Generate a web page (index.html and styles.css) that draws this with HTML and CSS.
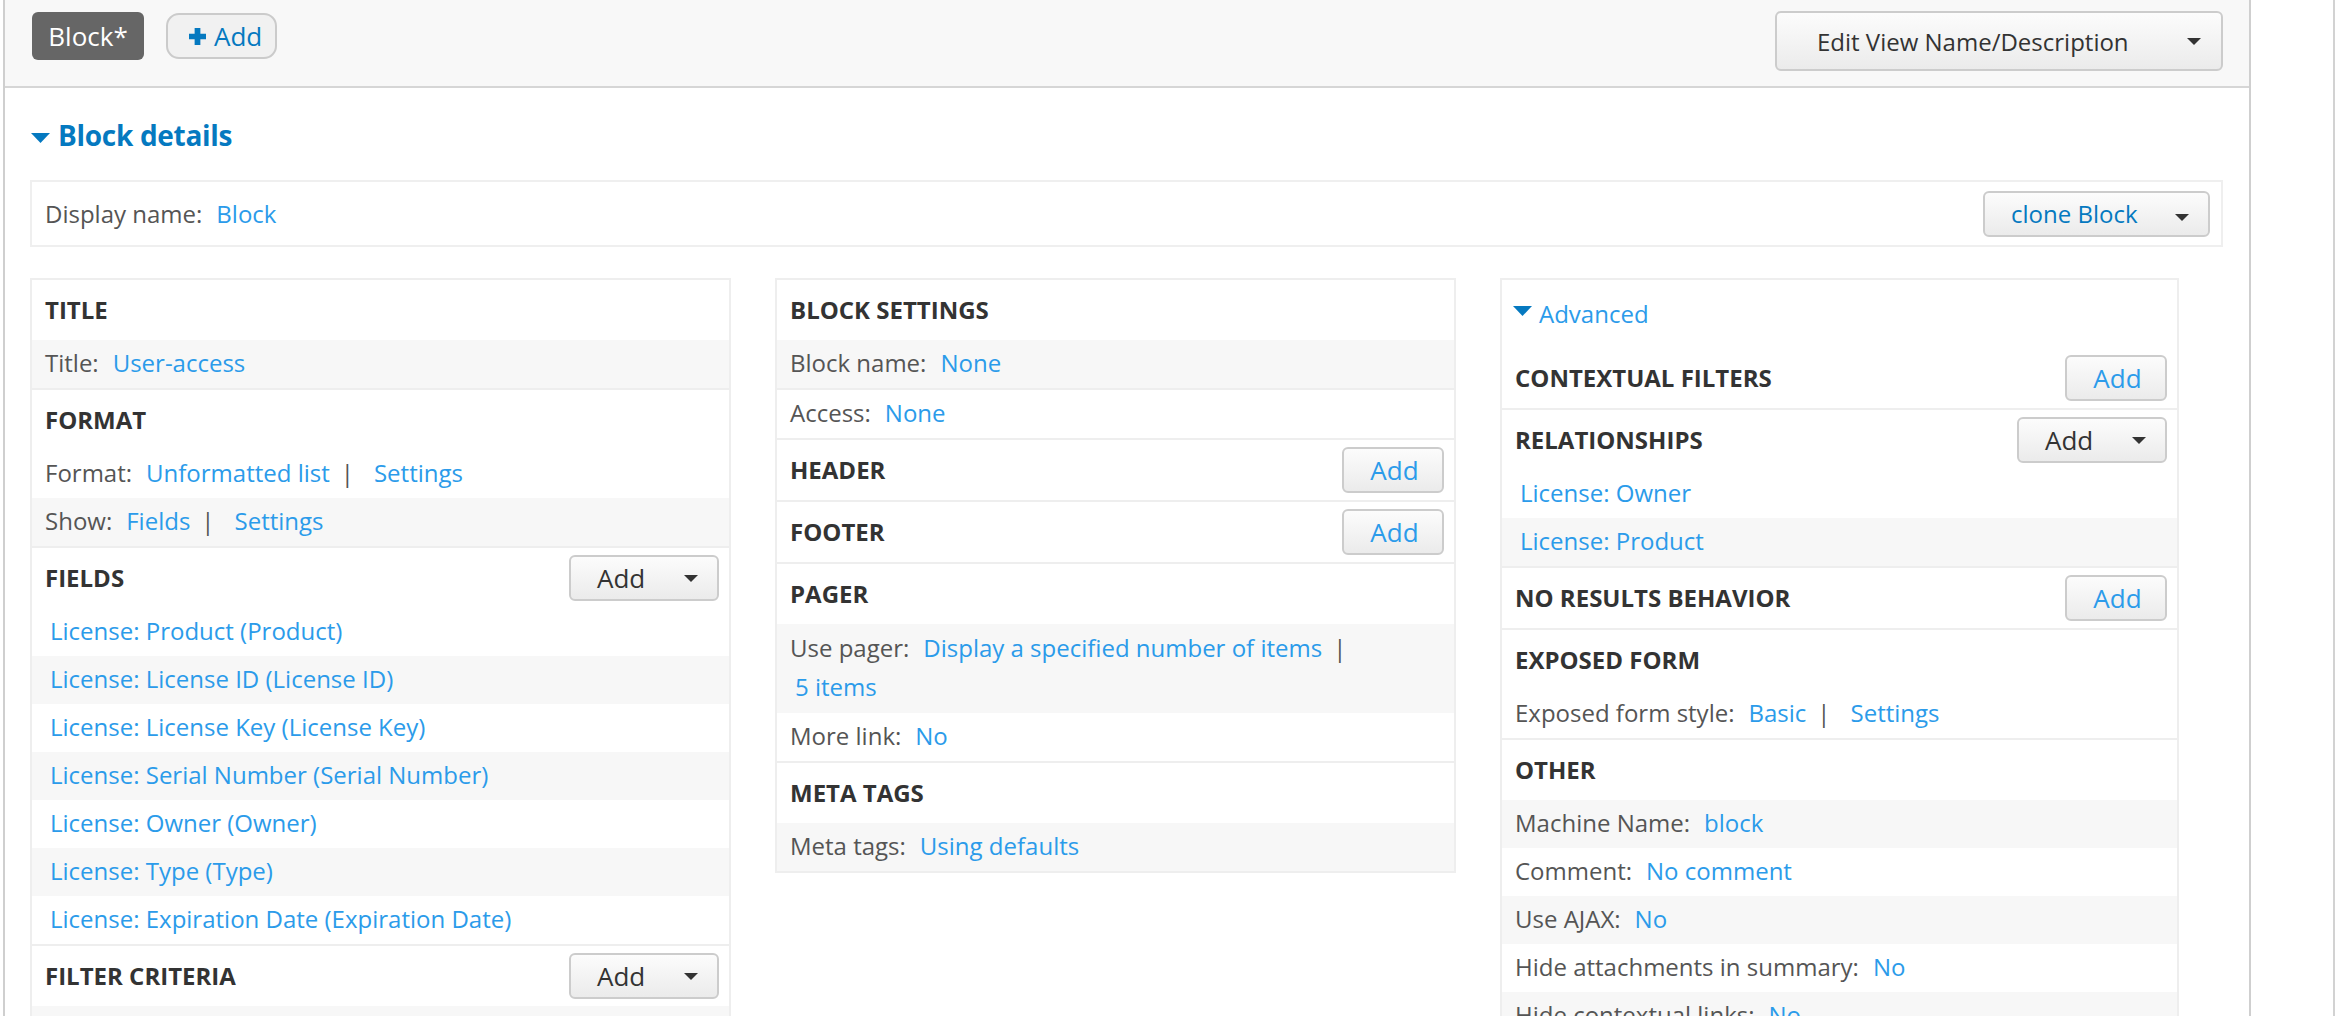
FILE: index.html
```html
<!DOCTYPE html>
<html lang="en">
<head>
<meta charset="utf-8">
<title>Views – Block</title>
<link rel="stylesheet" href="styles.css">
</head>
<body>
<div class="page">
  <div class="views-panel">
    <div class="tabs-bar">
      <div class="tabs">
        <span class="tab tab-active">Block*</span>
        <span class="tab tab-add"><svg viewBox="0 0 16 16" aria-hidden="true"><path d="M5.3 0h5.4v5.3h5.3v5.4h-5.3v5.3h-5.4v-5.3h-5.3v-5.4h5.3z"/></svg>Add</span>
      </div>
      <button class="btn btn-edit"><span>Edit View Name/Description</span><span class="caret"></span></button>
    </div>

    <div class="display">
      <div class="summary"><svg viewBox="0 0 19 10" aria-hidden="true"><path d="M0 0h19l-9.5 10z"/></svg>Block details</div>

      <div class="display-name">
        <div><span class="lbl">Display name:</span><a href="#">Block</a></div>
        <button class="btn btn-clone"><span>clone Block</span><span class="caret"></span></button>
      </div>

      <div class="columns">
        <div class="col">
          <div class="bucket">
            <div class="hd">Title</div>
            <div class="row alt"><span class="lbl">Title:</span><a href="#">User-access</a></div>
          </div>
          <div class="bucket">
            <div class="hd">Format</div>
            <div class="row"><span class="lbl">Format:</span><a href="#">Unformatted list</a><span class="sep">|</span><a href="#">Settings</a></div>
            <div class="row alt"><span class="lbl">Show:</span><a href="#">Fields</a><span class="sep">|</span><a href="#">Settings</a></div>
          </div>
          <div class="bucket">
            <div class="hd">Fields<button class="btn btn-drop"><span>Add</span><span class="caret"></span></button></div>
            <div class="row item"><a href="#">License: Product (Product)</a></div>
            <div class="row item alt"><a href="#">License: License ID (License ID)</a></div>
            <div class="row item"><a href="#">License: License Key (License Key)</a></div>
            <div class="row item alt"><a href="#">License: Serial Number (Serial Number)</a></div>
            <div class="row item"><a href="#">License: Owner (Owner)</a></div>
            <div class="row item alt"><a href="#">License: Type (Type)</a></div>
            <div class="row item"><a href="#">License: Expiration Date (Expiration Date)</a></div>
          </div>
          <div class="bucket">
            <div class="hd">Filter criteria<button class="btn btn-drop"><span>Add</span><span class="caret"></span></button></div>
            <div class="row item alt empty"></div>
          </div>
        </div>

        <div class="col">
          <div class="bucket">
            <div class="hd">Block settings</div>
            <div class="row alt"><span class="lbl">Block name:</span><a href="#">None</a></div>
          </div>
          <div class="bucket">
            <div class="row"><span class="lbl">Access:</span><a href="#">None</a></div>
          </div>
          <div class="bucket">
            <div class="hd">Header<button class="btn btn-add">Add</button></div>
          </div>
          <div class="bucket">
            <div class="hd">Footer<button class="btn btn-add">Add</button></div>
          </div>
          <div class="bucket">
            <div class="hd">Pager</div>
            <div class="row alt two"><span class="lbl">Use pager:</span><a href="#">Display a specified number of items</a><span class="sep">|</span><a class="next-line" href="#">5 items</a></div>
            <div class="row"><span class="lbl">More link:</span><a href="#">No</a></div>
          </div>
          <div class="bucket">
            <div class="hd">Meta tags</div>
            <div class="row alt"><span class="lbl">Meta tags:</span><a href="#">Using defaults</a></div>
          </div>
        </div>

        <div class="col">
          <div class="adv"><svg viewBox="0 0 19 10" aria-hidden="true"><path d="M0 0h19l-9.5 10z"/></svg><a href="#">Advanced</a></div>
          <div class="bucket">
            <div class="hd">Contextual filters<button class="btn btn-add">Add</button></div>
          </div>
          <div class="bucket">
            <div class="hd">Relationships<button class="btn btn-drop"><span>Add</span><span class="caret"></span></button></div>
            <div class="row item"><a href="#">License: Owner</a></div>
            <div class="row item alt"><a href="#">License: Product</a></div>
          </div>
          <div class="bucket">
            <div class="hd">No results behavior<button class="btn btn-add">Add</button></div>
          </div>
          <div class="bucket">
            <div class="hd">Exposed form</div>
            <div class="row"><span class="lbl">Exposed form style:</span><a href="#">Basic</a><span class="sep">|</span><a href="#">Settings</a></div>
          </div>
          <div class="bucket">
            <div class="hd">Other</div>
            <div class="row alt"><span class="lbl">Machine Name:</span><a href="#">block</a></div>
            <div class="row"><span class="lbl">Comment:</span><a href="#">No comment</a></div>
            <div class="row alt"><span class="lbl">Use AJAX:</span><a href="#">No</a></div>
            <div class="row"><span class="lbl">Hide attachments in summary:</span><a href="#">No</a></div>
            <div class="row alt"><span class="lbl">Hide contextual links:</span><a href="#">No</a></div>
          </div>
        </div>
      </div>
    </div>
  </div>
  <div class="edge"></div>
</div>
</body>
</html>
```
FILE: styles.css
```css
* { box-sizing: border-box; }

html, body {
  margin: 0;
  padding: 0;
  background: #fff;
}

body {
  font-family: "Open Sans", "Liberation Sans", sans-serif;
  font-size: 24px;
  color: #555;
}

a {
  color: #2b9bea;
  text-decoration: none;
}

.page {
  display: flex;
  min-height: 1016px;
}

.views-panel {
  margin-left: 3px;
  width: 2248px;
  min-height: 1016px;
  border-left: 2px solid #cfcfcf;
  border-right: 2px solid #cfcfcf;
}

.edge {
  margin-left: 82px;
  width: 7px;
  border-left: 2px solid #d2d2d2;
}

/* top tab bar */
.tabs-bar {
  display: flex;
  justify-content: space-between;
  align-items: flex-start;
  height: 88px;
  padding: 11px 26px 0 27px;
  background: #f8f8f8;
  border-bottom: 2px solid #d6d6d6;
}

.tabs {
  display: flex;
  align-items: center;
  gap: 22px;
  margin-top: 1px;
}

.tab {
  display: inline-flex;
  align-items: center;
  height: 48px;
  font-size: 26px;
  line-height: 1;
}

.tab-active {
  width: 112px;
  justify-content: center;
  background: #666;
  color: #fff;
  border-radius: 6px;
}

.tab-add {
  height: 46px;
  width: 111px;
  padding: 0 0 0 21px;
  background: #f1f1f1;
  border: 2px solid #cbcbcb;
  border-radius: 13px;
  color: #0579c0;
}

.tab-add svg {
  width: 17px;
  height: 17px;
  margin-right: 8px;
  fill: #0579c0;
}

/* buttons */
.btn {
  display: inline-flex;
  align-items: center;
  height: 46px;
  padding: 0;
  font-family: inherit;
  font-size: 26px;
  color: #333;
  background: linear-gradient(#fcfcfc, #ebebeb);
  border: 2px solid #cccccc;
  border-radius: 6px;
  cursor: pointer;
}

.btn-edit {
  width: 448px;
  height: 60px;
  justify-content: space-between;
  padding: 0 20px 0 40px;
  font-size: 24px;
}

.btn-clone {
  width: 227px;
  justify-content: space-between;
  padding: 0 19px 0 26px;
  font-size: 24px;
  color: #0579c0;
}

.btn-clone .caret {
  margin-top: 8px;
}

.btn-drop {
  width: 150px;
  justify-content: space-between;
  padding: 0 19px 0 26px;
}

.btn-add {
  width: 102px;
  justify-content: center;
  padding-left: 3px;
  color: #2b9bea;
}

.caret {
  width: 0;
  height: 0;
  border-left: 7px solid transparent;
  border-right: 7px solid transparent;
  border-top: 7px solid #333;
}

/* display area */
.display {
  padding: 0 26px 0 25px;
}

.summary {
  display: flex;
  align-items: center;
  height: 38px;
  margin-top: 28px;
  font-size: 28px;
  font-weight: 700;
  letter-spacing: -0.3px;
  color: #0579c0;
}

.summary svg {
  width: 19px;
  height: 10px;
  margin: 6px 8px 0 1px;
  fill: #0579c0;
}

.display-name {
  display: flex;
  align-items: center;
  justify-content: space-between;
  height: 67px;
  margin-top: 26px;
  padding: 0 11px 0 13px;
  border: 2px solid #efefef;
}

.lbl {
  margin-right: 14px;
}

.sep {
  margin: 0 20px 0 11px;
}

/* columns */
.columns {
  display: grid;
  grid-template-columns: 701px 681px 679px;
  column-gap: 44px;
  align-items: start;
  margin-top: 31px;
}

.col {
  border: 2px solid #eeeeee;
  background: #fff;
}

.bucket + .bucket {
  border-top: 2px solid #eeeeee;
}

.hd {
  display: flex;
  align-items: center;
  justify-content: space-between;
  height: 60px;
  padding: 0 10px 0 13px;
  line-height: 38px;
  font-weight: 700;
  text-transform: uppercase;
  color: #333;
}

.row {
  padding: 4px 15px 6px 13px;
  line-height: 38px;
}

.row.alt {
  background: #f7f7f7;
}

.row.item {
  padding-left: 18px;
}

.row.empty {
  height: 48px;
}

.row.two {
  padding-top: 5px;
  padding-bottom: 7px;
}

.next-line {
  display: block;
  padding-left: 5px;
  margin-top: 1px;
}

.adv {
  display: flex;
  align-items: center;
  height: 68px;
  padding: 0 13px 0 11px;
  line-height: 38px;
}

.adv svg {
  width: 19px;
  height: 10px;
  margin: -7px 7px 0 0;
  fill: #0579c0;
}
```
